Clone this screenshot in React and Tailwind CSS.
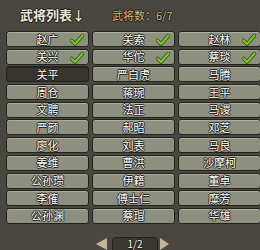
const generals = [
  { name: '赵广', done: true },
  { name: '关索', done: true },
  { name: '赵林', done: true },
  { name: '关兴', done: true },
  { name: '华佗', done: true },
  { name: '蔡琰', done: true },
  { name: '关平', active: true },
  { name: '严白虎' },
  { name: '马腾' },
  { name: '周仓' },
  { name: '蒋琬' },
  { name: '王平' },
  { name: '文聘' },
  { name: '法正' },
  { name: '马谡' },
  { name: '严颜' },
  { name: '郝昭' },
  { name: '邓芝' },
  { name: '廖化' },
  { name: '刘表' },
  { name: '马良' },
  { name: '姜维' },
  { name: '曹洪' },
  { name: '沙摩柯' },
  { name: '公孙瓒' },
  { name: '伊籍' },
  { name: '董卓' },
  { name: '李傕' },
  { name: '傅士仁' },
  { name: '糜芳' },
  { name: '公孙渊' },
  { name: '蔡瑁' },
  { name: '华雄' },
];

const outline = {
  textShadow:
    '1px 0 0 #1c1a16, -1px 0 0 #1c1a16, 0 1px 0 #1c1a16, 0 -1px 0 #1c1a16',
};

const Check = () => (
  <svg width="14" height="12" viewBox="0 0 14 12" className="absolute right-[4px] top-[2px]">
    <path d="M1.5 6.5 L5 10 L12.5 1.5" fill="none" stroke="#2a4a10" strokeWidth="3.6" strokeLinecap="round" strokeLinejoin="round" />
    <path d="M1.5 6.5 L5 10 L12.5 1.5" fill="none" stroke="#7cc62c" strokeWidth="2.2" strokeLinecap="round" strokeLinejoin="round" />
  </svg>
);

export default function App() {
  return (
    <div
      className="w-[260px] h-[250px] overflow-hidden bg-[#4a4740] relative"
      style={{ fontFamily: '"Noto Sans CJK SC", "Noto Sans", sans-serif' }}
    >
      <div className="h-[30px] flex items-center">
        <div className="ml-[20px] text-[13px] font-bold text-[#ebe6da]" style={outline}>
          武将列表↓
        </div>
        <div className="ml-[27px] text-[11px] text-[#d9bb72]" style={outline}>
          武将数：6/7
        </div>
      </div>

      <div className="grid grid-cols-[83px_83px_83px] gap-x-[3px] gap-y-[1.7px] pl-[6px] pt-[1px]">
        {generals.map((g) => (
          <div
            key={g.name}
            className={
              'relative h-[16px] rounded-[3px] border border-[#24221d] flex items-center justify-center text-[11px] leading-none text-white ' +
              (g.active
                ? 'bg-[#38352f] shadow-[inset_0_1px_0_#2a2824]'
                : 'bg-[#8d907f] shadow-[inset_0_1px_0_#abad9c]')
            }
          >
            <span style={outline}>{g.name}</span>
            {g.done && <Check />}
          </div>
        ))}
      </div>

      <div className="flex items-center mt-[13px] ml-[96px]">
        <div className="w-0 h-0 border-y-[6px] border-y-transparent border-r-[11px] border-r-[#c2b59b]" />
        <div className="ml-[5px] w-[46px] h-[14px] rounded-t-[4px] bg-[#3a3731] border border-[#24221d] flex items-center justify-center text-[10px] text-white" style={outline}>
          1/2
        </div>
        <div className="ml-[2px] w-0 h-0 border-y-[6px] border-y-transparent border-l-[9px] border-l-[#c2b59b]" />
      </div>
    </div>
  );
}
